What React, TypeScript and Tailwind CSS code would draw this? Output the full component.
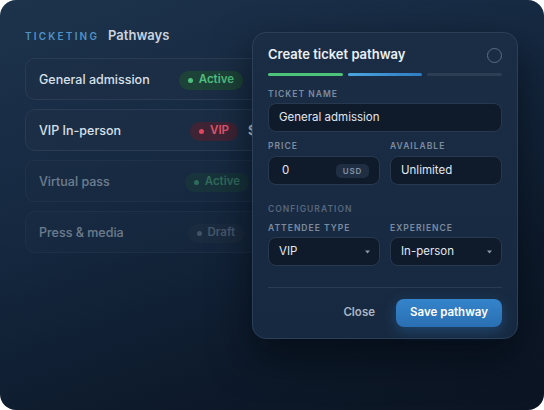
import React from "react";

const font = { fontFamily: "Inter, 'Noto Sans', sans-serif" };

function Badge({ tone, label }: { tone: "green" | "red" | "gray"; label: string }) {
  const cls =
    tone === "green"
      ? "bg-[#1d4338] text-[#4fbf7f]"
      : tone === "red"
      ? "bg-[#3f2436] text-[#e3566c]"
      : "bg-[#253447] text-[#8796a8]";
  const dot = tone === "green" ? "bg-[#4fbf7f]" : tone === "red" ? "bg-[#e3455e]" : "bg-[#7f8c9c]";
  return (
    <span className={`flex items-center gap-[6px] h-[19px] rounded-full pl-[9px] pr-[9px] text-[11.5px] font-semibold ${cls}`}>
      <span className={`w-[5px] h-[5px] rounded-full ${dot}`} />
      {label}
    </span>
  );
}

function Row({
  name,
  tone,
  label,
  price,
  priceW,
  dim,
}: {
  name: string;
  tone: "green" | "red" | "gray";
  label: string;
  price: string;
  priceW: string;
  dim?: boolean;
}) {
  return (
    <div
      className={`flex items-center h-[42px] rounded-[10px] border border-[#2a3c53] bg-[#1c2f46]/70 pl-[13px] pr-[14px] pt-[2px] ${
        dim ? "opacity-45" : ""
      }`}
    >
      <span className="flex-1 text-[12.5px] font-medium text-[#d8e0ea]">{name}</span>
      <Badge tone={tone} label={label} />
      <span className={`${priceW} pl-[10px] text-[12.5px] font-semibold text-[#d8e0ea]`}>{price}</span>
    </div>
  );
}

function Label({ children, className = "" }: { children: React.ReactNode; className?: string }) {
  return (
    <div className={`text-[8.5px] leading-[12px] font-semibold tracking-[0.12em] text-[#7c8ba0] ${className}`}>
      {children}
    </div>
  );
}

function Field({ children, select }: { children: React.ReactNode; select?: boolean }) {
  return (
    <div
      className={`flex items-center h-[29px] rounded-[8px] border border-[#28394f] bg-[#0f1a2a] pl-[10px] ${
        select ? "pr-[9px]" : "pr-[10px]"
      } text-[11.5px] text-[#e2e8f0]`}
    >
      {children}
    </div>
  );
}

function Caret() {
  return (
    <svg width="5" height="4" viewBox="0 0 5 4" className="ml-auto">
      <path d="M0 0.5 L5 0.5 L2.5 3.5 Z" fill="#8a97a8" />
    </svg>
  );
}

export default function App() {
  return (
    <div className="w-[544px] h-[410px] bg-white" style={font}>
      <div className="relative w-[544px] h-[410px] rounded-[16px] overflow-hidden bg-[linear-gradient(160deg,#1d334c_0%,#152840_40%,#0d1a2b_75%,#0b1422_100%)]">
        <div className="pl-[25px] pr-[38px] pt-[28px]">
          <div className="flex items-center h-[16px] gap-[9px]">
            <span className="text-[10px] font-semibold tracking-[0.22em] text-[#4f93c6]">TICKETING</span>
            <span className="text-[13px] font-semibold text-[#c9d3df]">Pathways</span>
          </div>
          <div className="mt-[14px] flex flex-col gap-[9px]">
            <Row name="General admission" tone="green" label="Active" price="Free" priceW="w-[248px]" />
            <Row name="VIP In-person" tone="red" label="VIP" price="$249" priceW="w-[253px]" />
            <Row name="Virtual pass" tone="green" label="Active" price="$29" priceW="w-[242px]" dim />
            <Row name="Press & media" tone="gray" label="Draft" price="—" priceW="w-[247px]" dim />
          </div>
        </div>

        <div className="absolute left-[252px] top-[32px] w-[266px] h-[307px] rounded-[14px] border border-[#2b3f57] bg-[linear-gradient(180deg,#1a2d45_0%,#172940_100%)] shadow-[0_18px_40px_rgba(3,8,16,0.7)] px-[15px] pt-[13px]">
          <div className="flex items-center justify-between h-[18px]">
            <span className="text-[13px] font-semibold text-[#eaf0f6]">Create ticket pathway</span>
            <span className="w-[15px] h-[15px] rounded-full border-[1.5px] border-[#5d6d82]" />
          </div>
          <div className="mt-[9px] flex gap-[5px] h-[3px]">
            <div className="flex-1 rounded-full bg-[#4cc27b]" />
            <div className="flex-1 rounded-full bg-[linear-gradient(90deg,#4aa6de,#2f7cc2)]" />
            <div className="flex-1 rounded-full bg-[#2c3e54]" />
          </div>

          <Label className="mt-[12px] mb-[3px]">TICKET NAME</Label>
          <Field>General admission</Field>

          <div className="mt-[8px] grid grid-cols-2 gap-[10px]">
            <div>
              <Label className="mb-[4px]">PRICE</Label>
              <Field>
                <span className="pl-[3px]">0</span>
                <span className="ml-auto flex items-center h-[14px] px-[7px] rounded-[5px] bg-[#1f2e42] text-[8px] font-semibold tracking-[0.1em] text-[#8391a4]">
                  USD
                </span>
              </Field>
            </div>
            <div>
              <Label className="mb-[4px]">AVAILABLE</Label>
              <Field>Unlimited</Field>
            </div>
          </div>

          <Label className="mt-[18px] text-[#56667c] tracking-[0.2em]">CONFIGURATION</Label>

          <div className="mt-[7px] grid grid-cols-2 gap-[10px]">
            <div>
              <Label className="mb-[3px]">ATTENDEE TYPE</Label>
              <Field select>
                <span>VIP</span>
                <Caret />
              </Field>
            </div>
            <div>
              <Label className="mb-[3px]">EXPERIENCE</Label>
              <Field select>
                <span>In-person</span>
                <Caret />
              </Field>
            </div>
          </div>

          <div className="mt-[21px] h-px bg-[#2a3c52]" />

          <div className="mt-[11px] flex items-center justify-end gap-[21px]">
            <span className="text-[11.5px] font-semibold text-[#a9b5c4]">Close</span>
            <button className="h-[28px] w-[106px] rounded-[8px] bg-[linear-gradient(180deg,#3484cb,#2a6fb3)] text-[11.5px] font-semibold text-white shadow-[0_4px_14px_rgba(48,128,200,0.35)]">
              Save pathway
            </button>
          </div>
        </div>
      </div>
    </div>
  );
}
